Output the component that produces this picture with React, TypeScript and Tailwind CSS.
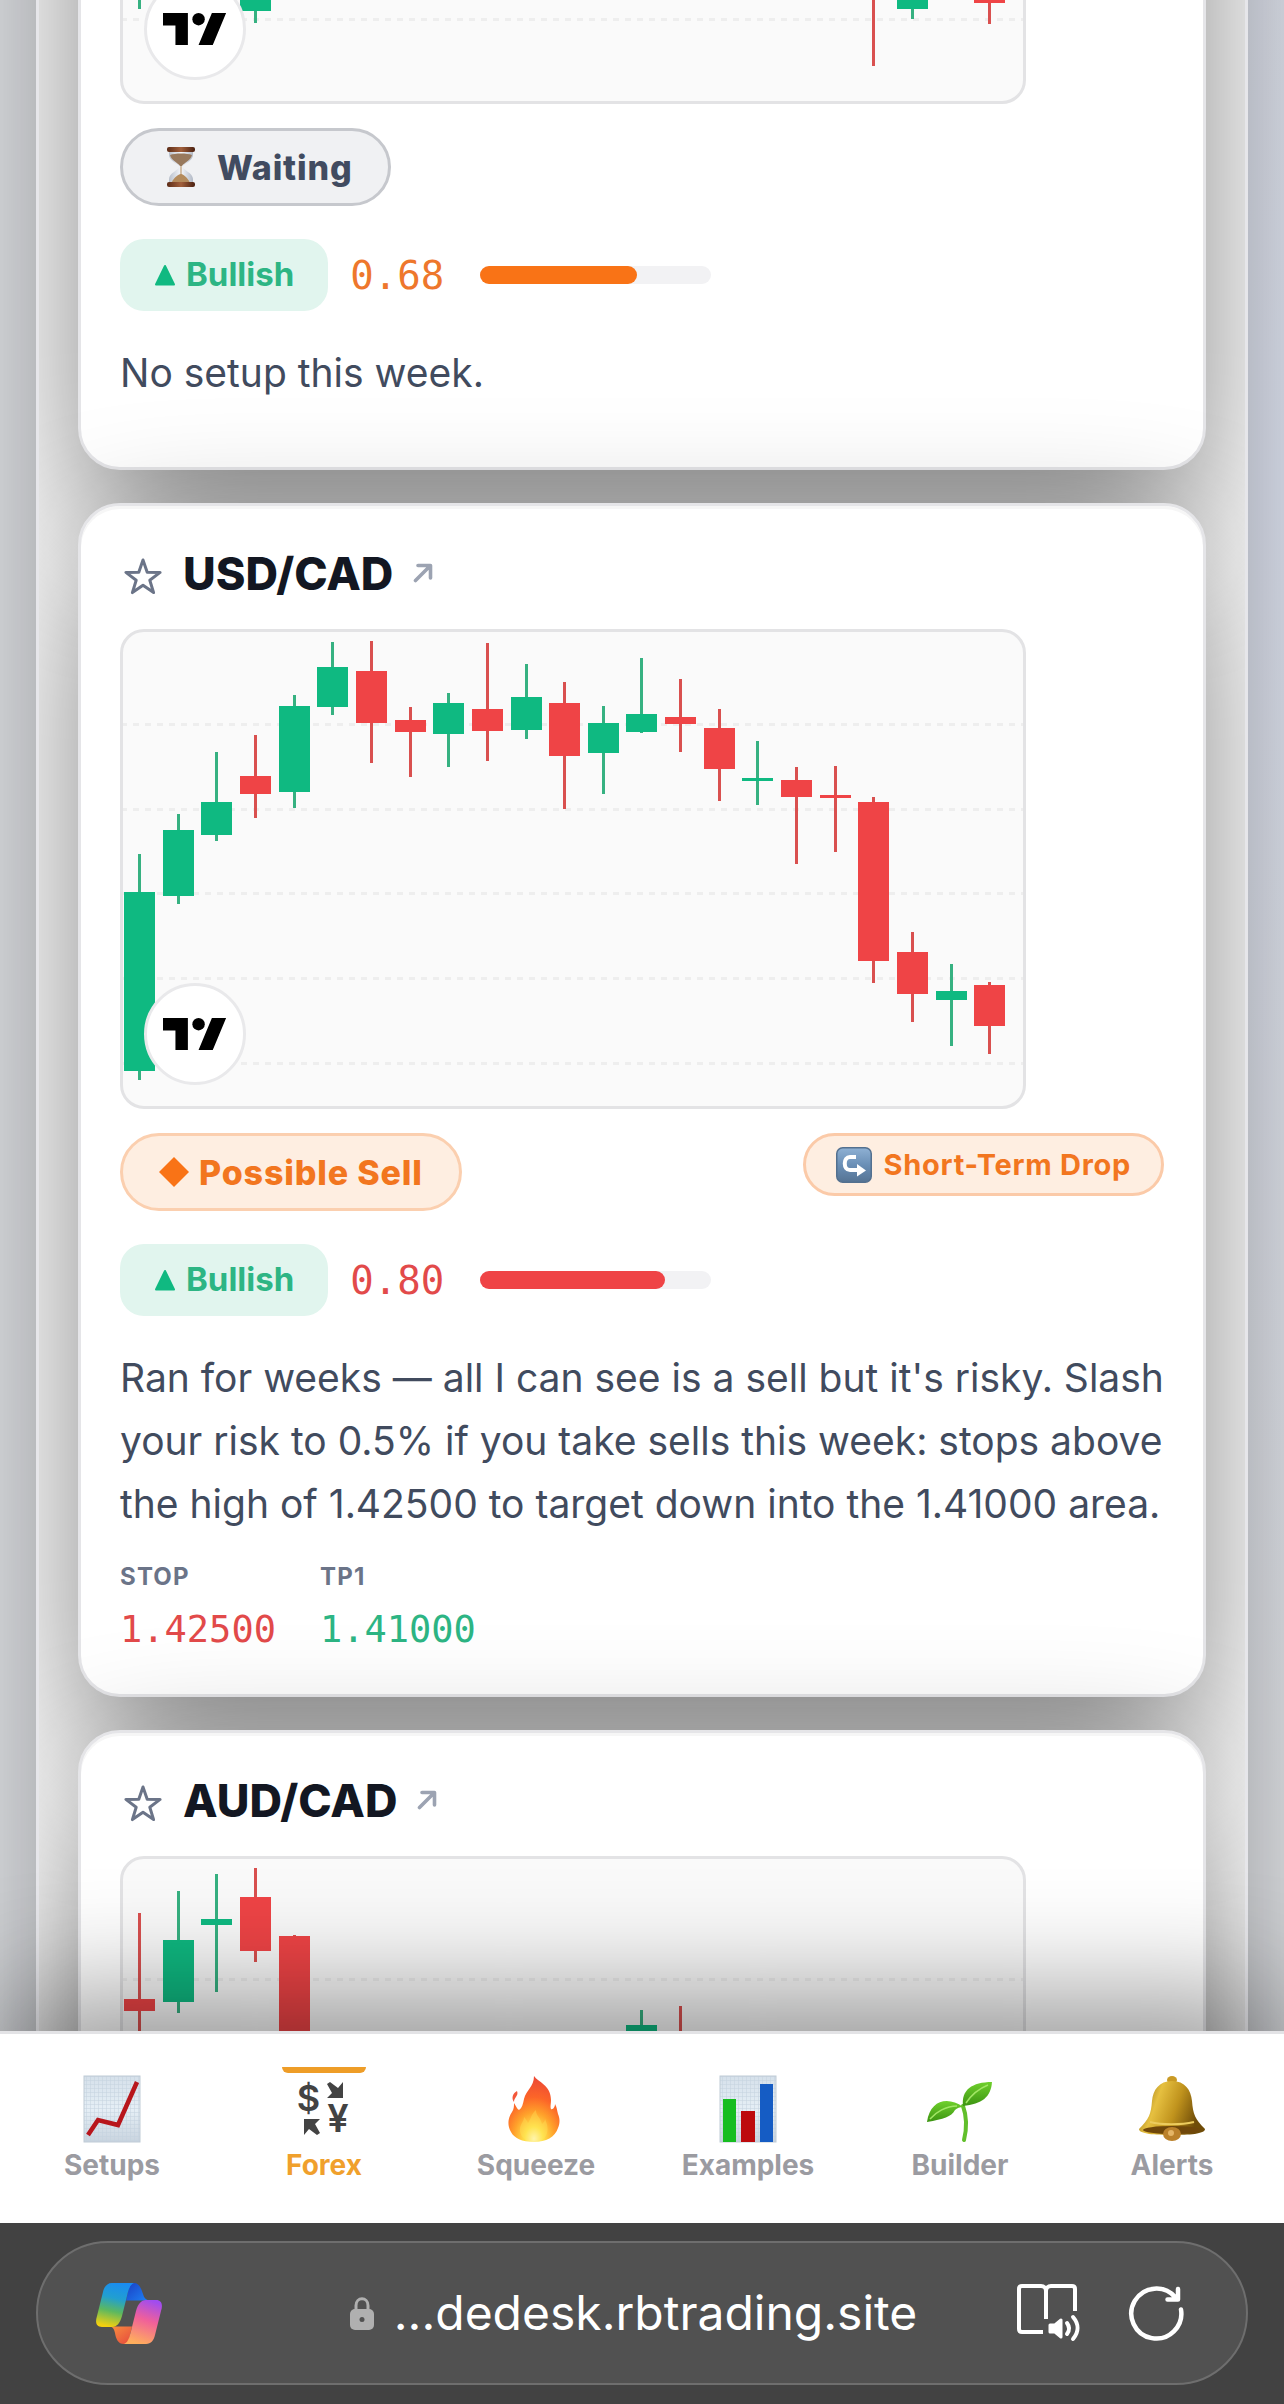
import React from "react";
import clsx from "clsx";

type Tone = "up" | "down";
// tone, high, body top, body bottom, low, slot
type Candle = [Tone, number, number, number, number, number];

interface Outlook {
  status: "waiting" | "sell";
  tag?: string;
  score: string;
  note: string;
  levels?: { label: string; value: string; tone: Tone }[];
}

interface Setup {
  pair?: string;
  candles: Candle[];
  grid: number[];
  outlook?: Outlook;
}

const SETUPS: Setup[] = [
  {
    candles: [
      ["up", 300, 330, 350, 382, 0],
      ["up", 250, 300, 384, 396, 3],
      ["down", 200, 220, 340, 439, 19],
      ["up", 330, 345, 382, 392, 20],
      ["down", 320, 340, 376, 397, 22],
    ],
    grid: [392],
    outlook: {
      status: "waiting",
      score: "0.68",
      note: "No setup this week.",
    },
  },
  {
    pair: "USD/CAD",
    candles: [
      ["up", 222, 260, 439, 448, 0],
      ["up", 182, 198, 264, 272, 1],
      ["up", 120, 170, 203, 209, 2],
      ["down", 103, 144, 162, 186, 3],
      ["up", 63, 74, 160, 176, 4],
      ["up", 10, 35, 75, 83, 5],
      ["down", 9, 39, 91, 131, 6],
      ["down", 75, 88, 100, 145, 7],
      ["up", 61, 71, 102, 135, 8],
      ["down", 11, 77, 99, 129, 9],
      ["up", 32, 65, 98, 107, 10],
      ["down", 50, 71, 124, 177, 11],
      ["up", 74, 91, 121, 162, 12],
      ["up", 26, 82, 100, 101, 13],
      ["down", 47, 85, 92, 120, 14],
      ["down", 77, 96, 137, 169, 15],
      ["up", 109, 146, 149, 173, 16],
      ["down", 135, 148, 165, 232, 17],
      ["down", 134, 163, 166, 220, 18],
      ["down", 165, 170, 329, 351, 19],
      ["down", 300, 320, 362, 390, 20],
      ["up", 332, 359, 368, 414, 21],
      ["down", 350, 353, 394, 422, 22],
    ],
    grid: [92, 177, 261, 346, 431],
    outlook: {
      status: "sell",
      tag: "Short-Term Drop",
      score: "0.80",
      note: "Ran for weeks — all I can see is a sell but it's risky. Slash your risk to 0.5% if you take sells this week: stops above the high of 1.42500 to target down into the 1.41000 area.",
      levels: [
        { label: "STOP", value: "1.42500", tone: "down" },
        { label: "TP1", value: "1.41000", tone: "up" },
      ],
    },
  },
  {
    pair: "AUD/CAD",
    candles: [
      ["down", 54, 140, 152, 230, 0],
      ["up", 32, 81, 143, 154, 1],
      ["up", 15, 60, 66, 133, 2],
      ["down", 9, 38, 92, 103, 3],
      ["down", 76, 77, 300, 320, 4],
      ["up", 151, 166, 220, 240, 13],
      ["down", 147, 180, 220, 240, 14],
    ],
    grid: [120],
  },
];

const Star: React.FC = () => (
  <svg viewBox="0 0 40 40" className="mt-2 size-10 shrink-0" fill="none" stroke="#6b7488" strokeWidth="3" strokeLinejoin="round">
    <path d="M20 3l4.2 12.2 12.9.2-10.3 7.8 3.8 12.4L20 28.2 9.4 35.6l3.8-12.4L2.9 15.4l12.9-.2z" />
  </svg>
);

const OpenArrow: React.FC = () => (
  <svg viewBox="0 0 20 20" className="size-5" fill="none" stroke="#9ca3b2" strokeWidth="3.6" strokeLinecap="round" strokeLinejoin="round">
    <path d="M2.500 17.500 17 3M5 2.500h12.500V15" />
  </svg>
);

const ChartBadge: React.FC = () => (
  <div className="absolute bottom-[21px] left-[21px] flex size-[102px] items-center justify-center rounded-full border-3 border-[#e9e9eb] bg-white">
    <svg viewBox="0 4 36 18" className="h-8 w-16">
      <path d="M14 22H7V11H0V4h14v18zM28 22h-8l7.500-18h8L28 22z" />
      <circle cx="20" cy="7.500" r="3.500" />
    </svg>
  </div>
);

const CandleChart: React.FC<{ candles: Candle[]; grid: number[] }> = ({ candles, grid }) => (
  <div className="relative h-[480px] max-w-[906px] overflow-hidden rounded-3xl border-3 border-[#e3e3e5] bg-[#fafafa]">
    <svg viewBox="0 0 900 474" className="block w-full" shapeRendering="crispEdges">
      {grid.map((y) => (
        <line key={y} x1="-2" x2="900" y1={y + 0.5} y2={y + 0.5} stroke="#eeeeee" strokeWidth="3" strokeDasharray="6 6" />
      ))}
      {candles.map(([tone, high, top, bottom, low, slot]) => {
        const x = Math.round(16 + slot * 38.65);
        const wick = tone === "up" ? "#36b181" : "#d9504f";
        return (
          <g key={slot}>
            <rect x={x - 1} y={high} width="3" height={low - high} fill={wick} />
            <rect x={x - 15} y={top} width="31" height={bottom - top} fill={tone === "up" ? "#0fb981" : "#ef4446"} />
          </g>
        );
      })}
    </svg>
    <ChartBadge />
  </div>
);

const Hourglass: React.FC = () => (
  <svg viewBox="0 0 28 42" className="h-[42px] w-7">
    <defs>
      <linearGradient id="wood" x1="0" x2="1">
        <stop offset="0" stopColor="#5c2c17" />
        <stop offset=".5" stopColor="#a2603c" />
        <stop offset="1" stopColor="#4a2010" />
      </linearGradient>
      <linearGradient id="glass" x1="0" x2="1">
        <stop offset="0" stopColor="#b9c0cb" />
        <stop offset=".5" stopColor="#f5f7fb" />
        <stop offset="1" stopColor="#b3bac6" />
      </linearGradient>
    </defs>
    <path d="M2 5h24v4c0 6-10 9-10 12s10 6 10 12v4H2v-4c0-6 10-9 10-12S2 15 2 9z" fill="url(#glass)" />
    <path d="M3 9c5-2 17-2 22 0-1 5-8 8-10 11h-2C11 17 4 14 3 9z" fill="#98795d" />
    <path d="M13.500 20h1v8c3 1 7 5 8 8H5c1-3 5-7 8.500-8z" fill="#b48b5c" />
    <rect y="1" width="28" height="5" rx="2" fill="url(#wood)" />
    <rect y="36" width="28" height="5" rx="2" fill="url(#wood)" />
  </svg>
);

const ReturnArrow: React.FC = () => (
  <svg viewBox="0 0 36 36" className="size-9">
    <defs>
      <linearGradient id="key" x2="0" y2="1">
        <stop offset="0" stopColor="#8fb1d4" />
        <stop offset=".5" stopColor="#6a8fb6" />
        <stop offset="1" stopColor="#557393" />
      </linearGradient>
    </defs>
    <rect x=".75" y=".75" width="34.500" height="34.500" rx="6" fill="url(#key)" stroke="#53708f" strokeWidth="1.500" />
    <path d="M20 10h-6c-7 0-7 13 0 13h8" fill="none" stroke="#fff" strokeWidth="4" />
    <path d="M21 17l9 6.500-9 6z" fill="#fff" />
  </svg>
);

const StatusPill: React.FC<{ status: Outlook["status"] }> = ({ status }) => (
  <span
    className={clsx(
      "inline-flex h-[78px] items-center rounded-full border-3 px-9 text-[34px] font-extrabold tracking-wide",
      status === "waiting" ? "border-[#c6c8cd] bg-[#f0f1f3] text-[#414b60]" : "border-[#fbcfaf] bg-[#feeee1] text-[#f2761f]"
    )}
  >
    {status === "waiting" ? (
      <span className="mr-[22px] ml-2">
        <Hourglass />
      </span>
    ) : (
      <svg viewBox="0 0 30 30" className="mr-2.5 size-[30px]" fill="#f97316">
        <path d="M15 0l15 15-15 15L0 15z" />
      </svg>
    )}
    {status === "waiting" ? "Waiting" : "Possible Sell"}
  </span>
);

const OutlookPanel: React.FC<{ outlook: Outlook }> = ({ outlook }) => {
  const { status, tag, score, note, levels } = outlook;
  const hot = status === "sell";
  return (
    <>
      <div className="mt-6 flex items-start justify-between">
        <StatusPill status={status} />
        {tag && (
          <span className="flex h-[63px] items-center gap-3 rounded-full border-3 border-[#fbcaa8] bg-[#feeee1] px-[30px] text-[29px] font-bold tracking-wide text-[#f2761f]">
            <ReturnArrow />
            {tag}
          </span>
        )}
      </div>

      <div className="mt-[33px] flex items-center">
        <span className="flex h-[72px] items-center gap-2.5 rounded-3xl bg-[#e1f5ee] px-[34px] text-[33px] font-bold text-[#2db584]">
          <svg viewBox="0 0 22 22" className="size-[22px]" fill="#10b981" stroke="#10b981" strokeWidth="2" strokeLinejoin="round">
            <path d="M11 2l9 18.500H2z" />
          </svg>
          Bullish
        </span>
        <span className={clsx("ml-[22px] font-['DejaVu_Sans_Mono',monospace] text-[39px] leading-none", hot ? "text-[#e24a4a]" : "text-[#ee772c]")}>
          {score}
        </span>
        <div className="ml-9 h-[18px] w-[231px] rounded-full bg-[#f2f2f4]">
          <div className={clsx("h-full rounded-full", hot ? "bg-[#ef4446]" : "bg-[#f97316]")} style={{ width: `${Number(score) * 100}%` }} />
        </div>
      </div>

      <p className="mt-[30px] text-[39px] leading-[63px] text-[#414b5e]">{note}</p>

      {levels ? (
        <dl className="mt-3.5 flex gap-11">
          {levels.map((l) => (
            <div key={l.label}>
              <dt className="text-[24px] leading-[56px] font-bold tracking-wider text-[#6b7488]">{l.label}</dt>
              <dd
                className={clsx(
                  "font-['DejaVu_Sans_Mono',monospace] text-[37px] leading-[50px]",
                  l.tone === "down" ? "text-[#e24a4a]" : "text-[#2db584]"
                )}
              >
                {l.value}
              </dd>
            </div>
          ))}
        </dl>
      ) : (
        <div className="h-6" />
      )}
    </>
  );
};

const SetupCard: React.FC<{ setup: Setup }> = ({ setup }) => (
  <article className="relative rounded-[42px] border-3 border-[#e5e5e8] bg-white p-[39px] shadow-[0_60px_150px_rgba(0,0,0,0.48),inset_0_3px_0_#f6f6f6]">
    {setup.pair && (
      <header className="mb-7 flex h-14 items-center">
        <button aria-label="Favourite" className="flex pl-[3px]">
          <Star />
        </button>
        <h2 className="ml-5 text-[45px] leading-none font-extrabold text-[#131722]">{setup.pair}</h2>
        <a href="#chart" aria-label="Open chart" className="ml-5">
          <OpenArrow />
        </a>
      </header>
    )}
    <CandleChart candles={setup.candles} grid={setup.grid} />
    {setup.outlook && <OutlookPanel outlook={setup.outlook} />}
  </article>
);

const Paper: React.FC = () => (
  <>
    <defs>
      <linearGradient id="paper" x2="0" y2="1">
        <stop offset="0" stopColor="#d5e0ea" />
        <stop offset=".5" stopColor="#e6eff6" />
        <stop offset="1" stopColor="#c9d4df" />
      </linearGradient>
      <pattern id="rule" width="4" height="4" patternUnits="userSpaceOnUse">
        <path d="M0 0h4M0 0v4" stroke="#c3d1de" strokeWidth="1" />
      </pattern>
    </defs>
    <rect x="6" y="0" width="56" height="66" fill="url(#paper)" />
    <rect x="6" y="0" width="56" height="66" fill="url(#rule)" stroke="#bfcbd6" />
  </>
);

const SetupsIcon = (
  <>
    <Paper />
    <path d="M10 59l10-15 20 5L59 6" fill="none" stroke="#b8161c" strokeWidth="4.500" />
  </>
);

const ForexIcon = (
  <g fill="#434343" fontFamily="Inter, sans-serif" fontWeight="600">
    <text x="18.500" y="35" fontSize="36" textAnchor="middle">$</text>
    <text x="48" y="56" fontSize="38" textAnchor="middle">¥</text>
    <path d="M53 6v16H37l5-5-5-9 3-2 8 6z" />
    <path d="M14 43h16l-5 5 5 9-3 2-8-6-5 6z" />
  </g>
);

const SqueezeIcon = (
  <>
    <defs>
      <radialGradient id="flame" cx=".5" cy=".95" r=".9">
        <stop offset="0" stopColor="#fffbd6" />
        <stop offset=".2" stopColor="#ffe14a" />
        <stop offset=".45" stopColor="#ffa02a" />
        <stop offset=".7" stopColor="#fc6528" />
        <stop offset="1" stopColor="#ee4b34" />
      </radialGradient>
    </defs>
    <path d="M32 0c4 6 17 9 17 24 0 4-1 7 0 9 2 1 4-2 4-5 2 3 2 7 3 10 2 5 2 9 0 14-3 9-12 14-24 14S12 62 9 56c-4-7-3-14 1-20 2-3 2-6 2-9 2 3 3 6 5 7 3-2 4-6 5-11 2-9 10-12 10-23z" fill="url(#flame)" />
    <path d="M15 15c2 5-3 6-3 11-3-4-1-9 3-11z" fill="#f4573a" />
    <path d="M33 66c-10 0-16-6-15-14 1-5 4-7 4-11 2 2 3 4 4 6 3-4 3-9 8-13 0 6 5 8 6 14 1-1 3-3 3-5 6 12 1 23-10 23z" fill="#ffe95c" opacity=".35" />
  </>
);

const ExamplesIcon = (
  <>
    <Paper />
    <rect x="9" y="23" width="13" height="43" fill="#16bd20" />
    <rect x="27" y="35" width="14" height="31" fill="#bd0a0d" />
    <rect x="46" y="8" width="13" height="58" fill="#155cc4" />
  </>
);

const BuilderIcon = (
  <>
    <defs>
      <linearGradient id="leaf" x2="0" y2="1">
        <stop offset="0" stopColor="#6fd02c" />
        <stop offset="1" stopColor="#3c9412" />
      </linearGradient>
    </defs>
    <path d="M37 30c4 11 4 22 1 34" fill="none" stroke="#61bf2b" strokeWidth="4" strokeLinecap="round" />
    <path d="M37 30C35 14 46 6 66 6c-1 15-10 22-29 24z" fill="url(#leaf)" />
    <path d="M37 31C22 20 4 24 1 46c17-3 24-5 28-12 2-2 5-3 8-3z" fill="url(#leaf)" />
    <path d="M40 27c6-9 12-14 22-18M31 30C20 30 10 36 4 43" fill="none" stroke="#a2e665" strokeWidth="1.500" />
  </>
);

const AlertsIcon = (
  <>
    <defs>
      <linearGradient id="brass" x2="1" y2=".3">
        <stop offset="0" stopColor="#7d5a08" />
        <stop offset=".35" stopColor="#e6c040" />
        <stop offset=".65" stopColor="#c0931d" />
        <stop offset="1" stopColor="#6f4c08" />
      </linearGradient>
    </defs>
    <ellipse cx="34" cy="4" rx="5" ry="4" fill="#c99a24" />
    <path d="M34 5c13 0 19 9 20 20 1 13 3 18 13 28 0 5-16 6-33 6S1 58 1 53c10-10 12-15 13-28C15 14 21 5 34 5z" fill="url(#brass)" />
    <ellipse cx="34" cy="54" rx="29" ry="4" fill="#70470a" />
    <ellipse cx="34" cy="58" rx="9" ry="7" fill="#bb812b" />
    <circle cx="33" cy="57" r="3" fill="#e5b566" />
    <path d="M12 46c12 3 31 3 44 0" fill="none" stroke="#eccb5e" strokeWidth="2" />
  </>
);

const TABS = [
  { label: "Setups", icon: SetupsIcon },
  { label: "Forex", icon: ForexIcon, active: true },
  { label: "Squeeze", icon: SqueezeIcon },
  { label: "Examples", icon: ExamplesIcon },
  { label: "Builder", icon: BuilderIcon },
  { label: "Alerts", icon: AlertsIcon },
];

const TabBar: React.FC = () => (
  <nav className="relative z-10 grid h-48 shrink-0 grid-cols-6 border-t-3 border-[#e3e3e6] bg-white px-1.5 shadow-[0_-30px_120px_rgba(0,0,0,0.43)]">
    {TABS.map((tab) => (
      <a key={tab.label} href={`#${tab.label.toLowerCase()}`} className="relative flex flex-col items-center pt-[42px]">
        {tab.active && <span className="absolute top-[33px] h-1.5 w-21 rounded-b-md bg-[#ee9d28]" />}
        <svg viewBox="0 0 68 66" className="h-[66px] w-[68px] overflow-visible">
          {tab.icon}
        </svg>
        <span className={clsx("mt-[5px] text-[28px] leading-9 font-bold", tab.active ? "text-[#f0a02c]" : "text-[#9b9ba1]")}>
          {tab.label}
        </span>
      </a>
    ))}
  </nav>
);

const AssistantLogo: React.FC = () => (
  <svg viewBox="0 0 66 61" className="h-[61px] w-[66px]">
    <defs>
      <linearGradient id="cool" x1=".6" x2=".4" y2="1">
        <stop offset="0" stopColor="#1a8cf0" />
        <stop offset=".35" stopColor="#219fd0" />
        <stop offset=".65" stopColor="#5cb860" />
        <stop offset="1" stopColor="#f2d010" />
      </linearGradient>
      <linearGradient id="warm" x1=".7" x2=".4" y2="1">
        <stop offset="0" stopColor="#a04cf0" />
        <stop offset=".45" stopColor="#f0609a" />
        <stop offset="1" stopColor="#ffae5c" />
      </linearGradient>
      <linearGradient id="navy" x2="1" y2=".8">
        <stop offset="0" stopColor="#1a3fc4" />
        <stop offset="1" stopColor="#1e7cf0" />
      </linearGradient>
      <linearGradient id="ember" x2="1" y2="1">
        <stop offset="0" stopColor="#f89040" />
        <stop offset="1" stopColor="#e6483c" />
      </linearGradient>
    </defs>
    <path d="M34 0h4c5 0 7 5 9 11 1 4 3 6 6 6.500H30z" fill="url(#navy)" />
    <path d="M32 61h-4c-6 0-8-5-9-11-1-4-2-6-5-6.500h22z" fill="url(#ember)" />
    <path d="M16 0h22c-5 2-6 9-8 17l-4 16c-2 7-5 11-10 11H6c-6 0-7-5-5-11L7 9c1-5 4-9 9-9z" fill="url(#cool)" />
    <path d="M50 61H28c5-2 6-9 8-17l4-16c2-7 5-11 10-11h10c6 0 7 5 5 11l-6 24c-1 5-4 9-9 9z" fill="url(#warm)" />
  </svg>
);

const AddressBar: React.FC = () => (
  <footer className="relative z-20 shrink-0 bg-[#424242] px-9 pt-[18px] pb-[19px]">
    <div className="flex h-36 items-center rounded-full border-2 border-[#6e6e6e] bg-[#515151] pr-[62px] pl-[58px]">
      <button aria-label="Assistant">
        <AssistantLogo />
      </button>
      <div className="flex flex-1 items-center justify-center gap-5 pl-[88px]">
        <svg viewBox="0 0 24 33" className="h-[33px] w-6">
          <path d="M6 14V8.500c0-9 12-9 12 0V14" fill="none" stroke="#b0b0b0" strokeWidth="3" />
          <rect y="12" width="24" height="21" rx="5" fill="#b0b0b0" />
          <circle cx="12" cy="22.500" r="2.500" fill="#515151" />
        </svg>
        <span className="text-[48px] leading-none text-white">...dedesk.rbtrading.site</span>
      </div>
      <div className="flex items-center gap-[47px]">
        <button aria-label="Read aloud">
          <svg viewBox="0 0 64 58" className="h-[58px] w-16" fill="none" stroke="#fff" strokeWidth="4" strokeLinecap="round" strokeLinejoin="round">
            <path d="M26 48H5c-2 0-3-1-3-3V5c0-2 1-3 3-3h19c3 0 5 2 5 5 0-3 2-5 5-5h21c2 0 3 1 3 3v22M29 7v28" strokeLinecap="butt" />
            <path d="M33 41h5l6-5v17l-6-5h-5z" fill="#fff" strokeWidth="3" />
            <path d="M50 39c3 4 3 7 0 11M56 33c6 7 6 15 0 22" />
          </svg>
        </button>
        <button aria-label="Reload">
          <svg viewBox="0 0 56 56" className="size-14" fill="none" stroke="#fff" strokeWidth="4.500" strokeLinecap="round" strokeLinejoin="round">
            <path d="M53 24.500A25 25 0 1 1 47.500 12.500M50 4v10.500H39.500" />
          </svg>
        </button>
      </div>
    </div>
  </footer>
);

export default function App() {
  return (
    <div className="flex h-screen flex-col overflow-hidden bg-[radial-gradient(ellipse_at_100%_20%,#e4e9f7,#e6e8ec_50%)] font-['Inter','Liberation_Sans',sans-serif]">
      <main className="min-h-0 flex-1 overflow-hidden px-9">
        {/* feed is scrolled part of the way into the first card */}
        <div className="-mt-[418px] flex flex-col gap-[33px] overflow-hidden border-x-3 border-[#e6e6ea] bg-white px-[39px] shadow-[0_0_150px_rgba(0,0,0,0.38)]">
          {SETUPS.map((setup, i) => (
            <SetupCard key={i} setup={setup} />
          ))}
        </div>
      </main>
      <TabBar />
      <AddressBar />
    </div>
  );
}
